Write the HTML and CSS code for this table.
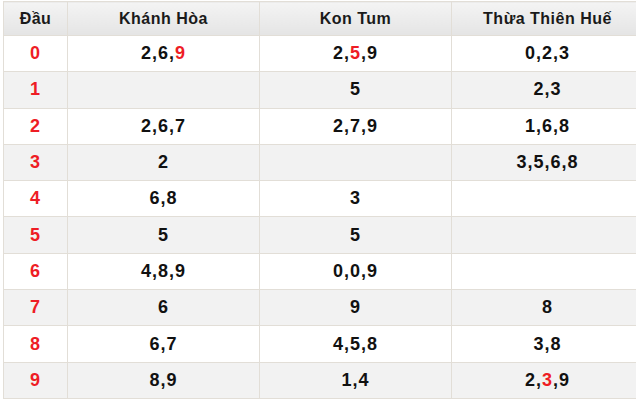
FILE: index.html
```html
<!DOCTYPE html>
<html lang="vi">
<head>
<meta charset="utf-8">
<link rel="stylesheet" href="styles.css">
</head>
<body>
<div class="wrap">
<table class="loto">
  <colgroup>
    <col class="c-dau"><col class="c-prov"><col class="c-prov"><col class="c-prov">
  </colgroup>
  <thead>
    <tr><th>Đầu</th><th>Khánh Hòa</th><th>Kon Tum</th><th>Thừa Thiên Huế</th></tr>
  </thead>
  <tbody>
    <tr><td class="dau">0</td><td>2,6,<span class="hl">9</span></td><td>2,<span class="hl">5</span>,9</td><td>0,2,3</td></tr>
    <tr><td class="dau">1</td><td></td><td>5</td><td>2,3</td></tr>
    <tr><td class="dau">2</td><td>2,6,7</td><td>2,7,9</td><td>1,6,8</td></tr>
    <tr><td class="dau">3</td><td>2</td><td></td><td>3,5,6,8</td></tr>
    <tr><td class="dau">4</td><td>6,8</td><td>3</td><td></td></tr>
    <tr><td class="dau">5</td><td>5</td><td>5</td><td></td></tr>
    <tr><td class="dau">6</td><td>4,8,9</td><td>0,0,9</td><td></td></tr>
    <tr><td class="dau">7</td><td>6</td><td>9</td><td>8</td></tr>
    <tr><td class="dau">8</td><td>6,7</td><td>4,5,8</td><td>3,8</td></tr>
    <tr><td class="dau">9</td><td>8,9</td><td>1,4</td><td>2,<span class="hl">3</span>,9</td></tr>
  </tbody>
</table>
</div>
</body>
</html>
```
FILE: styles.css
```css
html, body {
  margin: 0;
  padding: 0;
  background: #ffffff;
  overflow: hidden;
}
.wrap {
  padding: 1px 0 0 3px;
  width: 633px;
  height: 399px;
  overflow: hidden;
}
.loto {
  border-collapse: collapse;
  table-layout: fixed;
  width: 640px;
  font-family: "Liberation Sans", Arial, sans-serif;
  font-weight: bold;
  color: #111;
}
.c-dau { width: 64px; }
.c-prov { width: 192px; }
.loto th, .loto td {
  border: 1px solid #e2ded7;
  text-align: center;
  padding: 0;
}
.loto thead th {
  height: 33px;
  background: linear-gradient(#f4f4f4, #e4e4e4);
  color: #1a1a1a;
  font-size: 16px;
  letter-spacing: 0.5px;
}
.loto tbody td {
  height: 35.3px;
  font-size: 18px;
  letter-spacing: 1px;
}
.loto tbody tr:nth-child(even) td {
  background: #f2f2f2;
}
.dau, .hl {
  color: #ee1d25;
}
```
